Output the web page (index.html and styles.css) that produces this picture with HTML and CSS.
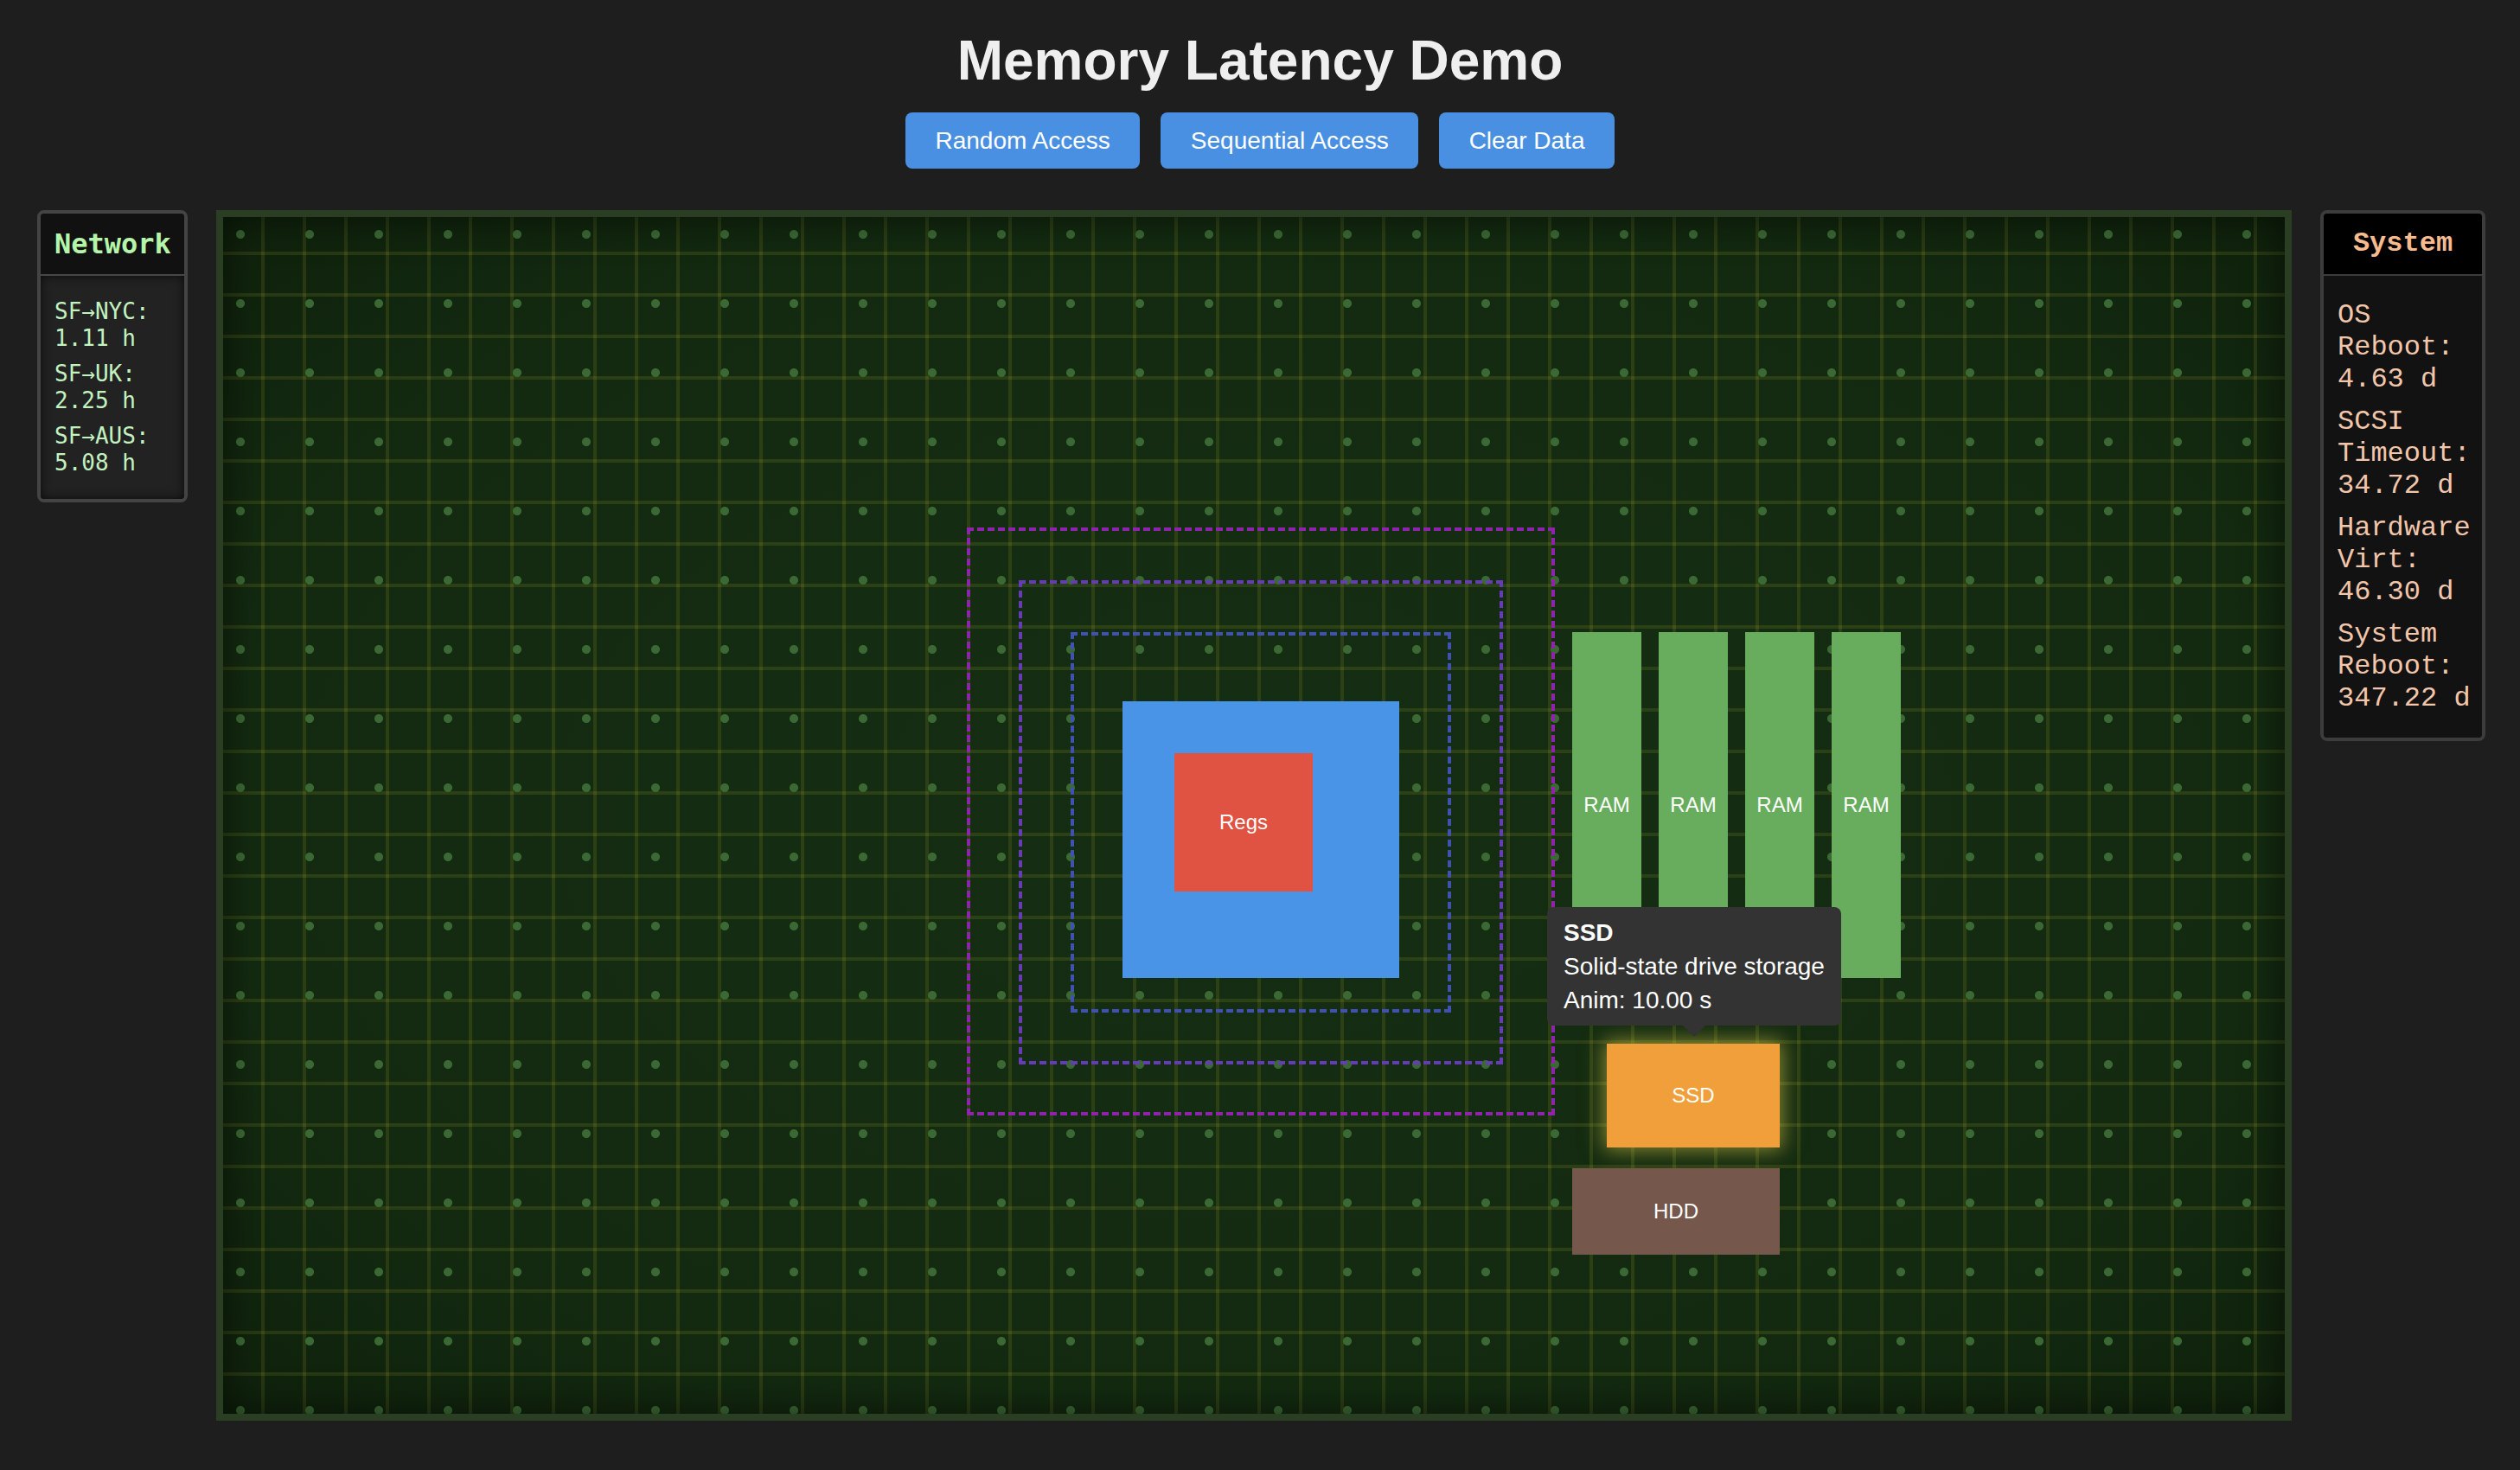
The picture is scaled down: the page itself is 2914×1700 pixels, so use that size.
FILE: index.html
```html
<!DOCTYPE html>
<html lang="en">
<head>
<meta charset="utf-8">
<title>Memory Latency Demo</title>
<link rel="stylesheet" href="styles.css">
</head>
<body>
<header class="top">
  <h1 class="title">Memory Latency Demo</h1>
  <div class="controls">
    <button class="btn">Random Access</button>
    <button class="btn">Sequential Access</button>
    <button class="btn">Clear Data</button>
  </div>
</header>
<main class="main">
  <aside class="panel panel-net">
    <div class="panel-head">Network</div>
    <div class="panel-body">
      <div class="stat">SF→NYC: 1.11 h</div>
      <div class="stat">SF→UK: 2.25 h</div>
      <div class="stat">SF→AUS: 5.08 h</div>
    </div>
  </aside>
  <section class="board">
    <div class="ring ring-l3"></div>
    <div class="ring ring-l2"></div>
    <div class="ring ring-l1"></div>
    <div class="chip cpu"></div>
    <div class="chip regs">Regs</div>
    <div class="chip ram ram-1">RAM</div>
    <div class="chip ram ram-2">RAM</div>
    <div class="chip ram ram-3">RAM</div>
    <div class="chip ram ram-4">RAM</div>
    <div class="chip ssd">SSD</div>
    <div class="chip hdd">HDD</div>
    <div class="tooltip">
      <div class="tip-title">SSD</div>
      <div>Solid-state drive storage</div>
      <div>Anim: 10.00 s</div>
    </div>
  </section>
  <aside class="panel panel-sys">
    <div class="panel-head">System</div>
    <div class="panel-body">
      <div class="stat">OS Reboot: 4.63 d</div>
      <div class="stat">SCSI Timeout: 34.72 d</div>
      <div class="stat">Hardware Virt: 46.30 d</div>
      <div class="stat">System Reboot: 347.22 d</div>
    </div>
  </aside>
</main>
</body>
</html>
```
FILE: styles.css
```css
html, body {
  margin: 0;
  padding: 0;
}
body {
  background: #1e1e1e;
  font-family: "Liberation Sans", Arial, Helvetica, sans-serif;
  color: #f0f0f0;
}
.top {
  padding-top: 33px;
  text-align: center;
}
.title {
  margin: 0;
  font-size: 64px;
  line-height: 74px;
  font-weight: bold;
  color: #efefef;
}
.controls {
  display: flex;
  justify-content: center;
  gap: 24px;
  margin-top: 23px;
}
.btn {
  height: 65px;
  padding: 0 34.5px;
  border: none;
  border-radius: 8px;
  background: #4a90e2;
  color: #ffffff;
  font-family: "Liberation Sans", Arial, sans-serif;
  font-size: 28px;
  cursor: pointer;
}
.main {
  display: flex;
  align-items: flex-start;
  gap: 33px;
  margin-top: 48px;
  padding-left: 43px;
}
.panel {
  flex-shrink: 0;
  box-sizing: border-box;
  border: 4px solid #444444;
  border-radius: 8px;
  overflow: hidden;
}
.panel-head {
  padding: 16px;
  text-align: center;
  font-weight: bold;
  font-size: 32px;
  line-height: 38px;
  white-space: nowrap;
}
.panel-net {
  width: 174px;
  font-family: "DejaVu Sans Mono", Menlo, monospace;
}
.panel-net .panel-head {
  background: #111111;
  color: #b4f5aa;
  border-bottom: 2px solid #474747;
}
.panel-net .panel-body {
  background: #222222;
  box-shadow: inset 0 0 12px rgba(0, 0, 0, 0.7);
  padding: 16px;
  font-size: 26px;
  line-height: 31px;
  color: #c2f2c0;
}
.panel-net .stat {
  margin: 10px 0;
}
.panel-sys {
  width: 191px;
  border-color: #3c3c3c;
  font-family: "Liberation Mono", "Courier New", monospace;
}
.panel-sys .panel-head {
  background: #000000;
  color: #f7bb8e;
  border-bottom: 2px solid #3c3c3c;
}
.panel-sys .panel-body {
  background: #121212;
  padding: 15px 13px 15px 16px;
  font-size: 32px;
  line-height: 37px;
  color: #f2c6aa;
}
.panel-sys .stat {
  margin: 12px 0;
}
.board {
  position: relative;
  flex-shrink: 0;
  box-sizing: border-box;
  width: 2400px;
  height: 1400px;
  border: 8px solid #2a3e24;
  background-color: #142b11;
  background-image:
    radial-gradient(circle at 20px 20px, #3b6934 4.5px, rgba(59, 105, 52, 0) 5.5px),
    linear-gradient(90deg, rgba(255, 235, 59, 0.1) 4px, transparent 4px),
    linear-gradient(rgba(255, 235, 59, 0.1) 4px, transparent 4px),
    radial-gradient(ellipse at center, #152e12 0%, #132a10 70%, #0f220c 100%);
  background-size: 80px 80px, 48px 48px, 48px 48px, 100% 100%;
  background-position: 0 0, 44px 0, 0 40px, 0 0;
  box-shadow: inset 0 0 45px rgba(0, 0, 0, 0.55);
}
.ring {
  position: absolute;
  box-sizing: border-box;
  border: 4px dashed;
}
.ring-l3 {
  left: 860px;
  top: 359px;
  width: 680px;
  height: 680px;
  border-color: #8e24aa;
}
.ring-l2 {
  left: 920px;
  top: 420px;
  width: 560px;
  height: 560px;
  border-color: #673ab7;
}
.ring-l1 {
  left: 980px;
  top: 480px;
  width: 440px;
  height: 440px;
  border-color: #3f51b5;
}
.chip {
  position: absolute;
  display: flex;
  align-items: center;
  justify-content: center;
  color: #ffffff;
  font-size: 24px;
}
.cpu {
  left: 1040px;
  top: 560px;
  width: 320px;
  height: 320px;
  background: #4a94e8;
}
.regs {
  left: 1100px;
  top: 620px;
  width: 160px;
  height: 160px;
  background: #e05242;
}
.ram {
  top: 480px;
  width: 80px;
  height: 400px;
  background: #67ad5d;
}
.ram-1 { left: 1560px; }
.ram-2 { left: 1660px; }
.ram-3 { left: 1760px; }
.ram-4 { left: 1860px; }
.ssd {
  left: 1600px;
  top: 956px;
  width: 200px;
  height: 120px;
  background: #f09f3a;
  box-shadow: 0 0 22px 3px rgba(255, 230, 80, 0.5);
}
.hdd {
  left: 1560px;
  top: 1100px;
  width: 240px;
  height: 100px;
  background: #76574b;
}
.tooltip {
  position: absolute;
  left: 1531px;
  top: 798px;
  padding: 10px 19px;
  background: #333333;
  color: #ffffff;
  border-radius: 8px;
  font-size: 28px;
  line-height: 39px;
  white-space: nowrap;
}
.tooltip::after {
  content: "";
  position: absolute;
  left: 50%;
  top: 100%;
  margin-left: -13px;
  border-left: 13px solid transparent;
  border-right: 13px solid transparent;
  border-top: 13px solid #333333;
}
.tip-title {
  font-weight: bold;
}
```
